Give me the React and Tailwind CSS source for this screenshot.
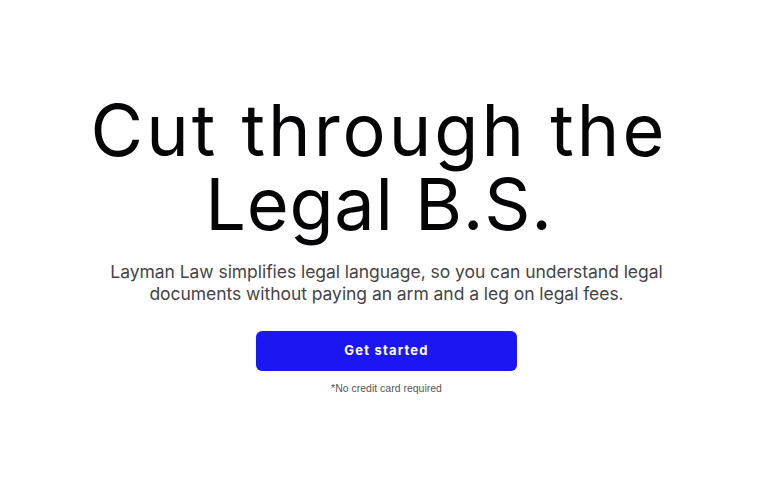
import React from "react";

export default function App() {
  return (
    <div className="min-h-screen bg-white flex flex-col items-center pt-[93px] pl-[5px]">
      <h1 className="text-center text-[72px] leading-[74px] text-[#050508] font-normal font-['Inter',sans-serif] pr-[15px]">
        <span className="tracking-[3px]">Cut through the</span>
        <br />
        <span className="tracking-[0.8px]">Legal B.S.</span>
      </h1>
      <p className="mt-[20px] text-center text-[17.5px] leading-[22px] text-[#444448] font-['Inter',sans-serif] tracking-[-0.05px]">
        Layman Law simplifies legal language, so you can understand legal
        <br />
        documents without paying an arm and a leg on legal fees.
      </p>
      <button className="mt-[26px] w-[261px] h-[40px] rounded-[6px] bg-[#1c17f2] text-white text-[13px] font-bold tracking-[1.2px] font-['Inter',sans-serif]">
        Get started
      </button>
      <p className="mt-[10px] text-[10.5px] text-[#555] font-['Liberation_Sans',sans-serif]">
        *No credit card required
      </p>
    </div>
  );
}
